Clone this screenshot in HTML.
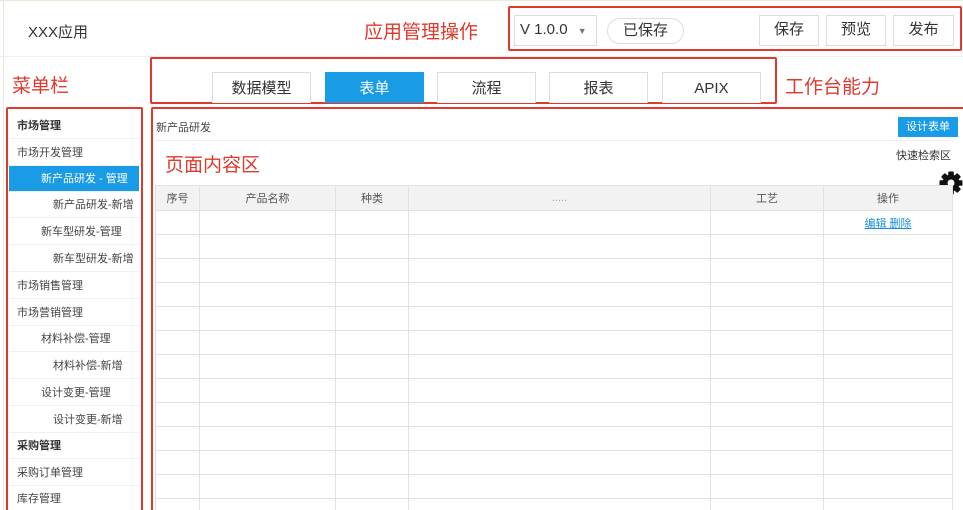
<!DOCTYPE html>
<html><head><meta charset="utf-8"><style>
*{margin:0;padding:0;box-sizing:border-box}
html,body{width:963px;height:510px;overflow:hidden}
body{background:#fff;font-family:"Liberation Sans","Noto Sans CJK SC",sans-serif;color:#333;position:relative}
.a{position:absolute}
.red{border:2px solid #e0392e;border-radius:2px}
.rt{color:#e0392e;font-size:19px}
.btn{position:absolute;border:1px solid #ddd;background:#fff;font-size:15px;text-align:center;line-height:28px;color:#333}
.tab{position:absolute;top:72px;height:31px;width:99px;border:1px solid #ddd;border-bottom:none;text-align:center;line-height:31px;font-size:15px;background:#fff}
.mi{position:absolute;left:9px;width:130px;height:26px;font-size:11px;line-height:26px;color:#444;border-bottom:1px solid #f0f0f0}
.b{font-weight:bold;color:#333}
table{border-collapse:collapse;position:absolute;left:155px;top:185px;width:798px}
td,th{border:1px solid #e2e2e2;height:24px;font-size:11px;font-weight:normal;color:#555;text-align:center}
th{background:#f2f2f2;height:25px}
</style></head><body>
<div class="a" style="left:3px;top:0;width:1px;height:510px;background:#e6ead8"></div>
<div class="a" style="left:0;top:0;width:963px;height:1px;background:#e6ead8"></div>
<div class="a" style="left:0;top:56px;width:963px;height:1px;background:#eee"></div>
<div class="a" style="left:28px;top:21px;font-size:15px;color:#333">XXX应用</div>
<div class="a rt" style="left:364px;top:17px">应用管理操作</div>
<div class="a red" style="left:508px;top:6px;width:454px;height:45px"></div>
<div class="btn" style="left:514px;top:15px;width:83px;text-align:left;padding-left:5px">V 1.0.0 <span style="font-size:9px;color:#777;margin-left:6px">▼</span></div>
<div class="btn" style="left:607px;top:18px;width:77px;height:26px;line-height:24px;border-radius:13px">已保存</div>
<div class="btn" style="left:759px;top:15px;width:60px;height:31px">保存</div>
<div class="btn" style="left:826px;top:15px;width:60px;height:31px">预览</div>
<div class="btn" style="left:893px;top:15px;width:61px;height:31px">发布</div>

<div class="a rt" style="left:12px;top:71px">菜单栏</div>
<div class="a red" style="left:150px;top:57px;width:627px;height:47px"></div>
<div class="tab" style="left:212px">数据模型</div>
<div class="tab" style="left:325px;background:#1a9be6;color:#fff;border-color:#1a9be6">表单</div>
<div class="tab" style="left:437px">流程</div>
<div class="tab" style="left:549px">报表</div>
<div class="tab" style="left:662px">APIX</div>
<div class="a rt" style="left:785px;top:72px">工作台能力</div>

<div class="a red" style="left:6px;top:107px;width:137px;height:420px"></div>
<div class="mi b" style="top:113px;padding-left:8px">市场管理</div>
<div class="mi" style="top:140px;padding-left:8px">市场开发管理</div>
<div class="mi" style="top:166px;padding-left:32px;background:#1a9be6;color:#fff">新产品研发 - 管理</div>
<div class="mi" style="top:192px;padding-left:44px">新产品研发-新增</div>
<div class="mi" style="top:219px;padding-left:32px">新车型研发-管理</div>
<div class="mi" style="top:246px;padding-left:44px">新车型研发-新增</div>
<div class="mi" style="top:273px;padding-left:8px">市场销售管理</div>
<div class="mi" style="top:300px;padding-left:8px">市场营销管理</div>
<div class="mi" style="top:326px;padding-left:32px">材料补偿-管理</div>
<div class="mi" style="top:353px;padding-left:44px">材料补偿-新增</div>
<div class="mi" style="top:380px;padding-left:32px">设计变更-管理</div>
<div class="mi" style="top:407px;padding-left:44px">设计变更-新增</div>
<div class="mi b" style="top:433px;padding-left:8px">采购管理</div>
<div class="mi" style="top:460px;padding-left:8px">采购订单管理</div>
<div class="mi" style="top:486px;padding-left:8px">库存管理</div>

<div class="a red" style="left:151px;top:107px;width:820px;height:420px"></div>
<div class="a" style="left:156px;top:119px;font-size:11px;color:#444">新产品研发</div>
<div class="a" style="left:155px;top:140px;width:798px;height:1px;background:#eee"></div>
<div class="a rt" style="left:165px;top:150px">页面内容区</div>
<div class="a" style="left:898px;top:117px;width:60px;height:20px;background:#1a9be6;color:#fff;font-size:11px;line-height:20px;text-align:center">设计表单</div>
<div class="a" style="left:896px;top:147px;font-size:11px;color:#333">快速检索区</div>
<svg class="a" style="left:939px;top:171px" width="24" height="24" viewBox="0 0 24 24">
<g fill="#111" transform="translate(12 12)">
<rect x="-2.8" y="-11.5" width="5.6" height="23" rx="1"/>
<rect x="-2.8" y="-11.5" width="5.6" height="23" rx="1" transform="rotate(45)"/>
<rect x="-2.8" y="-11.5" width="5.6" height="23" rx="1" transform="rotate(90)"/>
<rect x="-2.8" y="-11.5" width="5.6" height="23" rx="1" transform="rotate(135)"/>
<circle r="8.5"/>
<circle r="3.5" fill="#fff"/>
</g></svg>
<table>
<tr><th style="width:44px">序号</th><th style="width:136px">产品名称</th><th style="width:73px">种类</th><th style="width:302px;color:#aaa">.....</th><th style="width:113px">工艺</th><th>操作</th></tr>
<tr><td></td><td></td><td></td><td></td><td></td><td style="color:#1a8fe0;text-decoration:underline">编辑 删除</td></tr>
<tr><td></td><td></td><td></td><td></td><td></td><td></td></tr>
<tr><td></td><td></td><td></td><td></td><td></td><td></td></tr>
<tr><td></td><td></td><td></td><td></td><td></td><td></td></tr>
<tr><td></td><td></td><td></td><td></td><td></td><td></td></tr>
<tr><td></td><td></td><td></td><td></td><td></td><td></td></tr>
<tr><td></td><td></td><td></td><td></td><td></td><td></td></tr>
<tr><td></td><td></td><td></td><td></td><td></td><td></td></tr>
<tr><td></td><td></td><td></td><td></td><td></td><td></td></tr>
<tr><td></td><td></td><td></td><td></td><td></td><td></td></tr>
<tr><td></td><td></td><td></td><td></td><td></td><td></td></tr>
<tr><td></td><td></td><td></td><td></td><td></td><td></td></tr>
<tr><td></td><td></td><td></td><td></td><td></td><td></td></tr>
</table>
</body></html>
